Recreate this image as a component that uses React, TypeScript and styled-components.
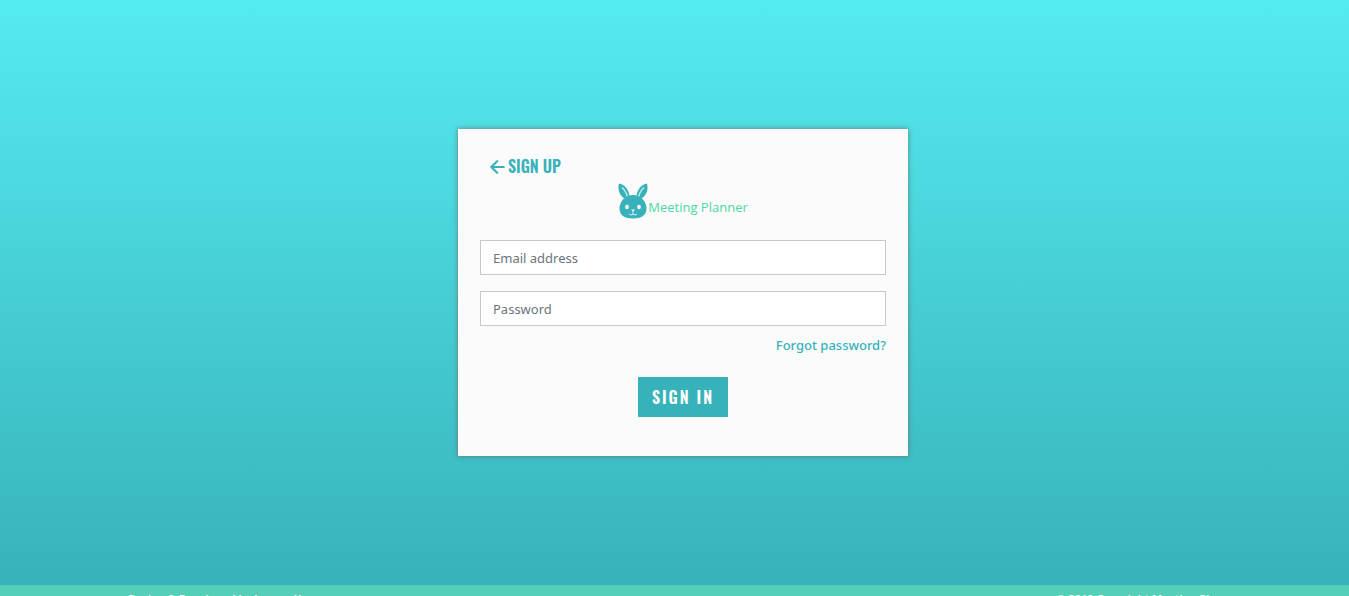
import React from "react";
import styled, { createGlobalStyle } from "styled-components";

const Global = createGlobalStyle`
  *, *::before, *::after { box-sizing: border-box; }
  body { margin: 0; font-family: "Segoe UI", "Noto Sans", sans-serif; font-size: 13px; line-height: 20px; }
`;

const Page = styled.div`
  height: 100vh;
  overflow: hidden;
`;

const Main = styled.main`
  display: flex;
  justify-content: center;
  align-items: center;
  height: calc(100vh - 11px);
  padding-left: 17px;
  background: linear-gradient(#55ebf0, #38b2ba);
`;

const Card = styled.form`
  display: flex;
  flex-direction: column;
  width: 450px;
  padding: 25px 22px 39px;
  background: #fbfbfb;
  box-shadow: 0 0 5px rgba(100, 100, 100, 0.8);
`;

const SignUpLink = styled.a`
  display: flex;
  align-items: center;
  align-self: flex-start;
  gap: 3px;
  margin-left: 9px;
  color: #38b2ba;
  font: 600 16px/24px Oswald, "Liberation Sans Narrow", sans-serif;
  text-decoration: none;
`;

const Brand = styled.div`
  display: flex;
  align-items: flex-end;
  align-self: center;
  height: 40px;
  margin: 3px 0 19px;
  color: #4ed8a4;
  font: 500 13px/28px "Open Sans", "Noto Sans", sans-serif;
`;

const Field = styled.input`
  width: 100%;
  height: 35px;
  margin-bottom: 16px;
  padding: 0 12px;
  border: 1px solid #c8c8c8;
  border-radius: 0;
  background: #fff;
  font: 13px "Segoe UI", "Noto Sans", sans-serif;
  &::placeholder { color: #6c757d; opacity: 1; }
`;

const ForgotLink = styled.a`
  align-self: flex-end;
  margin-top: -7px;
  color: #38b2ba;
  font-weight: 500;
  text-decoration: none;
`;

const SignInButton = styled.button`
  align-self: center;
  width: 90px;
  height: 40px;
  margin-top: 22px;
  padding: 0;
  border: 0;
  background: #38b2ba;
  color: #fff;
  font: 600 16px/24px Oswald, "Liberation Sans Narrow", sans-serif;
  letter-spacing: 2px;
`;

const Footer = styled.footer`
  display: flex;
  justify-content: space-between;
  padding: 4px 108px 4px 128px;
  background: #56cfb8;
  color: #fff;
  font-size: 11px;
  font-weight: 600;
`;

const Arrow = () => (
  <svg width="16" height="18" viewBox="0 0 16 18" fill="none" stroke="currentColor" strokeWidth="2.2" strokeLinecap="round" strokeLinejoin="round" aria-hidden="true">
    <path d="M8.200 4.200 2.300 10l5.900 5.800M2.300 10H14.800" />
  </svg>
);

const Rabbit = () => (
  <svg width="30" height="38" viewBox="0 0 30 38" fill="#38b2ba" aria-hidden="true">
    <path d="M1 .5C6 1 10.500 6 11.500 12.500L6.500 15.500C1 12 -.5 6 1 .5ZM29 .5C24 1 19.500 6 18.500 12.500L23.500 15.500C29 12 30.500 6 29 .5Z" />
    <path d="M4 4.500c3.500 3 4.500 6 5.500 9.500M26 4.500c-3.500 3-4.500 6-5.500 9.500" fill="none" stroke="#c3e7e9" strokeWidth="1.500" />
    <path d="M15 12C23 12 28.500 18.500 28.500 25.500C28.500 32.500 23 35.500 15 35.500S1.500 32.500 1.500 25.500C1.500 18.500 7 12 15 12Z" />
    <g fill="#fff">
      <ellipse cx="9" cy="24" rx="1.800" ry="2.200" />
      <ellipse cx="21" cy="24" rx="1.800" ry="2.200" />
      <path d="M13.200 26.500h3.600L15 28.600Z" />
    </g>
    <path d="M15 28v3.500M11 31.200c1 .9 3 .9 4 0c1 .9 3 .9 4 0" fill="none" stroke="#d5eff0" />
  </svg>
);

export default function App() {
  return (
    <Page>
      <Global />
      <Main>
        <Card onSubmit={(e) => e.preventDefault()}>
          <SignUpLink href="#signup"><Arrow />SIGN UP</SignUpLink>
          <Brand><Rabbit /><span>Meeting Planner</span></Brand>
          <Field type="email" placeholder="Email address" aria-label="Email address" />
          <Field type="password" placeholder="Password" aria-label="Password" />
          <ForgotLink href="#forgot">Forgot password?</ForgotLink>
          <SignInButton type="submit">SIGN IN</SignInButton>
        </Card>
      </Main>
      <Footer>
        <span>Design &amp; Developed by Joanna Xu</span>
        <span>© 2019 Copyright Meeting Planner</span>
      </Footer>
    </Page>
  );
}
